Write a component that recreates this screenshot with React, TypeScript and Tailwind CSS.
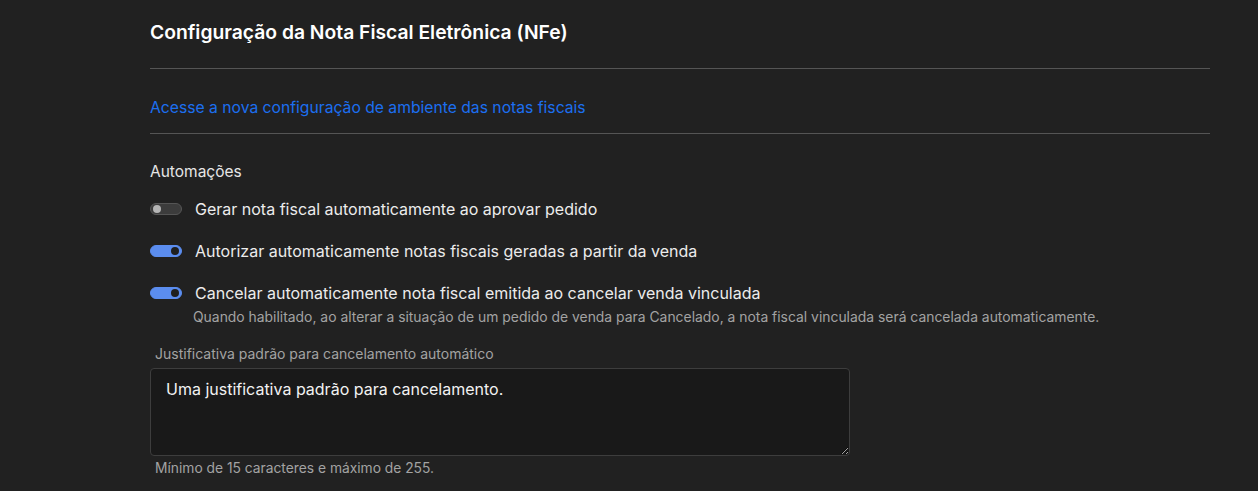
import { useState } from "react"

function Toggle({ on }: { on: boolean }) {
  return (
    <span
      className={`relative inline-flex h-[12px] w-[32px] shrink-0 items-center rounded-full border ${
        on ? "border-[#5b8def] bg-[#5b8def]" : "border-[#555] bg-[#3c3c3c]"
      }`}
    >
      <span
        className={`absolute top-[1px] h-[8px] w-[8px] rounded-full ${
          on ? "right-[2px] bg-[#1f1f1f]" : "left-[2px] bg-[#b5b5b5]"
        }`}
      />
    </span>
  )
}

export default function App() {
  const [text, setText] = useState("Uma justificativa padrão para cancelamento.")

  const rows = [
    { label: "Gerar nota fiscal automaticamente ao aprovar pedido", on: false },
    { label: "Autorizar automaticamente notas fiscais geradas a partir da venda", on: true },
    { label: "Cancelar automaticamente nota fiscal emitida ao cancelar venda vinculada", on: true },
  ]

  return (
    <div
      className="min-h-[491px] w-full bg-[#212121] text-[#f2f2f2]"
      style={{ fontFamily: "Inter, 'Noto Sans', sans-serif" }}
    >
      <div className="ml-[150px] w-[1060px]">
        {/* Header */}
        <div className="flex h-[69px] items-center border-b border-[#555] pb-[4px]">
          <h1 className="text-[19.3px] font-semibold text-white">
            Configuração da Nota Fiscal Eletrônica (NFe)
          </h1>
        </div>

        {/* Link */}
        <div className="border-b border-[#555] pt-[29px] pb-[15px]">
          <a href="#" className="block text-[15.7px] leading-[20px] text-[#1c6ff0]">
            Acesse a nova configuração de ambiente das notas fiscais
          </a>
        </div>

        {/* Automations */}
        <div className="pt-[28px]">
          <div className="text-[15.5px] leading-[20px] text-[#e6e6e6]">Automações</div>

          <div className="mt-[17px] flex flex-col gap-[22px]">
            {rows.map((r, i) => (
              <div key={i}>
                <div className="flex h-[20px] items-center gap-[13px]">
                  <Toggle on={r.on} />
                  <span className="text-[16px] leading-[20px] text-[#ececec]">{r.label}</span>
                </div>
                {i === 2 && (
                  <div className="ml-[43px] mt-[5px] text-[13.9px] leading-[18px] text-[#a3a3a3]">
                    Quando habilitado, ao alterar a situação de um pedido de venda para Cancelado, a nota fiscal vinculada será cancelada automaticamente.
                  </div>
                )}
              </div>
            ))}
          </div>

          <div className="mt-[19px] w-[700px]">
            <label className="ml-[5px] block text-[14px] leading-[18px] text-[#a3a3a3]">
              Justificativa padrão para cancelamento automático
            </label>
            <textarea
              value={text}
              onChange={(e) => setText(e.target.value)}
              className="mt-[5px] block h-[88px] w-[700px] rounded-[4px] border border-[#3d3d3d] bg-[#191919] px-[15px] py-[10px] text-[16px] leading-[20px] text-[#f2f2f2] outline-none"
            />
            <div className="ml-[5px] mt-[3px] text-[13.8px] leading-[18px] text-[#a3a3a3]">
              Mínimo de 15 caracteres e máximo de 255.
            </div>
          </div>
        </div>
      </div>
    </div>
  )
}
